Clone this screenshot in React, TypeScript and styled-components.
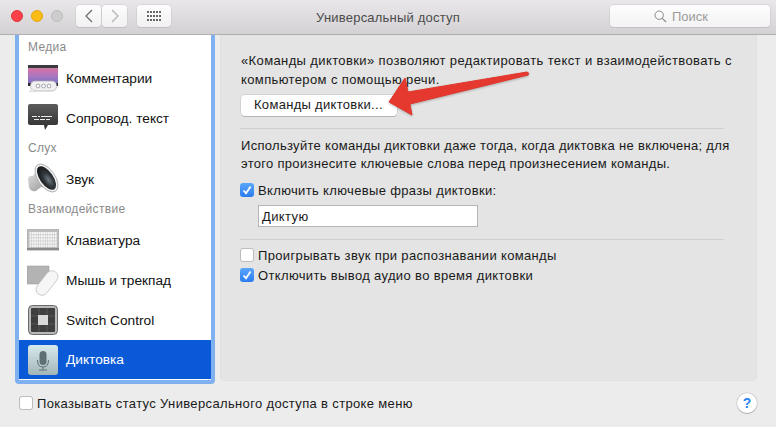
import { ReactNode } from "react";
import styled, { createGlobalStyle } from "styled-components";

const GlobalStyle = createGlobalStyle`
  html, body {
    margin: 0;
    padding: 0;
    background: #ececec;
    overflow: hidden;
  }
  * { box-sizing: border-box; }
`;

function CommentsIcon() {
  return (
    <svg width="32" height="30" viewBox="0 0 32 30">
      <defs>
        <linearGradient id="cm" x1="0" y1="0" x2="0" y2="1">
          <stop offset="0" stopColor="#d96fa6" />
          <stop offset="0.5" stopColor="#a979bf" />
          <stop offset="1" stopColor="#7a6fc4" />
        </linearGradient>
      </defs>
      <rect x="1" y="2" width="30" height="3.5" fill="#3c3a3c" />
      <rect x="1" y="5.5" width="30" height="15" fill="url(#cm)" />
      <rect x="1" y="20" width="30" height="3" fill="#2c2a2e" />
      <rect x="3.5" y="18" width="26" height="10" rx="4.5" fill="#f1f1f3" stroke="#a8a8ac" strokeWidth="0.7" />
      <path d="M5 26 L2 29 L9 28 Z" fill="#f1f1f3" stroke="#b8b8bc" strokeWidth="0.4" />
      <circle cx="11" cy="23" r="1.9" fill="#fff" stroke="#8f8f96" strokeWidth="0.8" />
      <circle cx="16.5" cy="23" r="1.9" fill="#fff" stroke="#8f8f96" strokeWidth="0.8" />
      <circle cx="22" cy="23" r="1.9" fill="#fff" stroke="#8f8f96" strokeWidth="0.8" />
    </svg>
  );
}

function CaptionsIcon() {
  return (
    <svg width="32" height="28" viewBox="0 0 32 28">
      <defs>
        <linearGradient id="cp" x1="0" y1="0" x2="0" y2="1">
          <stop offset="0" stopColor="#5c5c5c" />
          <stop offset="1" stopColor="#2e2e2e" />
        </linearGradient>
      </defs>
      <path d="M3 0 H29 Q31 0 31 2 V19 Q31 21 29 21 H21 L18 26 L17 21 H3 Q1 21 1 19 V2 Q1 0 3 0 Z" fill="url(#cp)" />
      <path d="M5 12.5 H10 M11 12.5 H13 M14 12.5 H25 M7 15.5 H12 M13 15.5 H18 M19 15.5 H23" stroke="#ececec" strokeWidth="1" />
    </svg>
  );
}

function SoundIcon() {
  return (
    <svg width="32" height="32" viewBox="0 0 32 32">
      <defs>
        <linearGradient id="sn" x1="0" y1="0" x2="1" y2="1">
          <stop offset="0" stopColor="#e6e6e6" />
          <stop offset="1" stopColor="#8a8a8a" />
        </linearGradient>
        <radialGradient id="sc" cx="0.55" cy="0.6" r="0.6">
          <stop offset="0" stopColor="#6d7a80" />
          <stop offset="0.5" stopColor="#30363a" />
          <stop offset="1" stopColor="#16181a" />
        </radialGradient>
      </defs>
      <path d="M1 16 Q2 12 6 13 L11 6 L27 27 L14 24 L9 28 Q3 29 2 24 Z" fill="url(#sn)" />
      <ellipse cx="19.5" cy="15" rx="8.5" ry="16" fill="#f2f2f2" stroke="#9a9a9a" strokeWidth="0.7" transform="rotate(-35 19.5 15)" />
      <ellipse cx="19.5" cy="15" rx="6.6" ry="13.6" fill="url(#sc)" transform="rotate(-35 19.5 15)" />
    </svg>
  );
}

function KeyboardIcon() {
  const keys = [];
  for (let row = 0; row < 5; row++) {
    for (let col = 0; col < 12; col++) {
      keys.push(<rect key={`${row}-${col}`} x={2.5 + col * 2.3} y={3 + row * 3.1} width="1.9" height="2.5" fill="#f7f7f7" />);
    }
  }
  return (
    <svg width="32" height="22" viewBox="0 0 32 22">
      <rect x="0" y="0" width="32" height="20" rx="1" fill="#bdbdbd" stroke="#a4a4a4" strokeWidth="0.6" />
      <rect x="0" y="19" width="32" height="2.4" fill="#8a8a8a" />
      {keys}
    </svg>
  );
}

function MouseIcon() {
  return (
    <svg width="32" height="34" viewBox="0 0 32 34">
      <path d="M0 3 H22 V21 H0 Z" fill="#b3b3b3" stroke="#a0a0a0" strokeWidth="0.6" />
      <rect x="14" y="6" width="12" height="28" rx="6" fill="#f6f6f6" stroke="#bcbcbc" strokeWidth="0.7" transform="rotate(38 20 20)" />
    </svg>
  );
}

function SwitchIcon() {
  return (
    <svg width="30" height="30" viewBox="0 0 30 30">
      <rect x="0.5" y="0.5" width="29" height="29" rx="4" fill="#b9b9b9" stroke="#6a6a6a" />
      <rect x="3" y="3" width="24" height="24" rx="1" fill="#3f3f3f" />
      <path d="M11 3 V27 M19 3 V27 M3 11 H27 M3 19 H27" stroke="#5e5e5e" strokeWidth="0.8" />
      <rect x="10" y="10" width="10" height="10" fill="#d9d9d9" />
    </svg>
  );
}

function MicIcon() {
  return (
    <svg width="30" height="30" viewBox="0 0 30 30">
      <defs>
        <linearGradient id="mc" x1="0" y1="0" x2="0" y2="1">
          <stop offset="0" stopColor="#d7e9ed" />
          <stop offset="1" stopColor="#a3b5b6" />
        </linearGradient>
      </defs>
      <rect x="0" y="0" width="30" height="30" rx="3" fill="url(#mc)" />
      <rect x="11.5" y="6" width="7" height="14" rx="3.5" fill="#5f7072" />
      <path d="M9.5 15 Q9.5 22 15 22 Q20.5 22 20.5 15 M15 22 V25 M11 25 H19" fill="none" stroke="#5f7072" strokeWidth="1" />
    </svg>
  );
}

function Check() {
  return (
    <svg width="10" height="10" viewBox="0 0 10 10">
      <path d="M1.5 5.5 L4 8.2 L8.6 1.5" fill="none" stroke="#fff" strokeWidth="1.8" />
    </svg>
  );
}

function CheckRow({ checked, children }: { checked?: boolean; children: ReactNode }) {
  return (
    <CheckLine>
      <CheckBox $checked={checked}>{checked && <Check />}</CheckBox>
      {children}
    </CheckLine>
  );
}

function SideRow({ icon, label, selected }: { icon: ReactNode; label: string; selected?: boolean }) {
  return (
    <Row $selected={selected}>
      <IconSlot>{icon}</IconSlot>
      {label}
    </Row>
  );
}

export default function App() {
  return (
    <Window>
      <GlobalStyle />
      <TitleBar>
        <Lights>
          <Light $color="#fc4047" $edge="#e2343b" />
          <Light $color="#fdbc14" $edge="#e0a410" />
          <Light $color="#cdcdcd" $edge="#bcbcbc" />
        </Lights>
        <NavGroup>
          <ToolButton $width={25}>
            <svg width="10" height="14" viewBox="0 0 10 14">
              <path d="M8 1 L2 7 L8 13" fill="none" stroke="#6c6c6c" strokeWidth="1.3" />
            </svg>
          </ToolButton>
          <ToolButton $width={25}>
            <svg width="10" height="14" viewBox="0 0 10 14">
              <path d="M2 1 L8 7 L2 13" fill="none" stroke="#b4b4b4" strokeWidth="1.3" />
            </svg>
          </ToolButton>
        </NavGroup>
        <ToolButton $width={34}>
          <svg width="15" height="11" viewBox="0 0 15 11" fill="#666">
            {[0, 4, 8].map((y) =>
              [0, 3, 6, 9, 12].map((x) => <rect key={`${x}-${y}`} x={x} y={y} width="2" height="2" />)
            )}
          </svg>
        </ToolButton>
        <Title>Универсальный доступ</Title>
        <SearchBox>
          <svg width="13" height="13" viewBox="0 0 13 13">
            <circle cx="5.2" cy="5.2" r="4.2" fill="none" stroke="#8a8a8a" strokeWidth="1" />
            <path d="M8.3 8.3 L12 12" stroke="#8a8a8a" strokeWidth="1.2" />
          </svg>
          Поиск
        </SearchBox>
      </TitleBar>

      <Body>
        <Sidebar>
          <SideList>
            <GroupLabel>Медиа</GroupLabel>
            <SideRow icon={<CommentsIcon />} label="Комментарии" />
            <SideRow icon={<CaptionsIcon />} label="Сопровод. текст" />
            <GroupLabel $tall>Слух</GroupLabel>
            <SideRow icon={<SoundIcon />} label="Звук" />
            <GroupLabel $tall>Взаимодействие</GroupLabel>
            <SideRow icon={<KeyboardIcon />} label="Клавиатура" />
            <SideRow icon={<MouseIcon />} label="Мышь и трекпад" />
            <SideRow icon={<SwitchIcon />} label="Switch Control" />
            <SideRow icon={<MicIcon />} label="Диктовка" selected />
          </SideList>
        </Sidebar>

        <Panel>
          <Para $leading={19} $spacing={0.38}>
            «Команды диктовки» позволяют редактировать текст и взаимодействовать с
            <br />
            компьютером с помощью речи.
          </Para>
          <PushButton>Команды диктовки...</PushButton>
          <Divider />
          <Para $leading={18} $spacing={0.3}>
            Используйте команды диктовки даже тогда, когда диктовка не включена; для
            <br />
            этого произнесите ключевые слова перед произнесением команды.
          </Para>
          <KeyRow>
            <CheckRow checked>Включить ключевые фразы диктовки:</CheckRow>
          </KeyRow>
          <PhraseInput>Диктую</PhraseInput>
          <Divider />
          <OptionRows>
            <CheckRow>Проигрывать звук при распознавании команды</CheckRow>
            <CheckRow checked>Отключить вывод аудио во время диктовки</CheckRow>
          </OptionRows>
        </Panel>
      </Body>

      <Footer>
        <CheckRow>Показывать статус Универсального доступа в строке меню</CheckRow>
        <HelpButton>?</HelpButton>
      </Footer>

      <Arrow width="150" height="60" viewBox="0 0 150 60">
        <path
          d="M139 8 Q142 9 140 11 L22 40 L24 51 L1 38 L17 14 L20 28 Z"
          fill="#e5392f"
          stroke="#e0362c"
          strokeWidth="1"
          strokeLinejoin="round"
        />
      </Arrow>
    </Window>
  );
}

const font = `"Liberation Sans", Arial, sans-serif`;

const Window = styled.div`
  position: relative;
  width: 776px;
  height: 427px;
  background: #ececec;
  font-family: ${font};
  font-size: 13px;
  color: #1a1a1a;
  overflow: hidden;
`;

const TitleBar = styled.div`
  position: relative;
  height: 35px;
  display: flex;
  align-items: flex-start;
  padding: 5px 6px 0 11px;
  background: linear-gradient(#e9e7e9, #d3d1d3);
  border-bottom: 1px solid #b0aeb0;
`;

const Lights = styled.div`
  display: flex;
  gap: 8px;
  margin-top: 5px;
  margin-right: 13px;
`;

const Light = styled.span<{ $color: string; $edge: string }>`
  width: 12px;
  height: 12px;
  border-radius: 50%;
  background: ${(p) => p.$color};
  border: 1px solid ${(p) => p.$edge};
`;

const NavGroup = styled.div`
  display: flex;
  gap: 1px;
  margin-right: 10px;
`;

const ToolButton = styled.div<{ $width: number }>`
  width: ${(p) => p.$width}px;
  height: 22px;
  display: flex;
  align-items: center;
  justify-content: center;
  background: linear-gradient(#fdfdfd, #f1f1f1);
  border-radius: 4px;
  box-shadow: 0 0 0 0.5px #c8c6c8, 0 1px 0 #bdbbbd;
`;

const Title = styled.div`
  position: absolute;
  left: 0;
  right: 0;
  top: 10px;
  text-align: center;
  color: #4c4c4c;
  font-size: 13px;
  letter-spacing: 0.2px;
`;

const SearchBox = styled.div`
  margin-left: auto;
  width: 160px;
  height: 22px;
  display: flex;
  align-items: center;
  justify-content: center;
  gap: 5px;
  padding-right: 18px;
  color: #9a9a9a;
  font-size: 13px;
  background: linear-gradient(#fdfdfd, #f3f3f3);
  border-radius: 4px;
  box-shadow: 0 0 0 0.5px #c8c6c8, 0 1px 0 #bdbbbd;
`;

const Body = styled.div`
  display: flex;
  align-items: flex-start;
  padding-left: 15px;
`;

const Sidebar = styled.div`
  width: 200px;
  height: 349px;
  padding: 0 4px 4px;
  background: #7fb0f0;
  border-radius: 0 0 4px 4px;
`;

const SideList = styled.div`
  height: 345px;
  padding-top: 3px;
  background: #fff;
`;

const GroupLabel = styled.div<{ $tall?: boolean }>`
  height: ${(p) => (p.$tall ? 21 : 20)}px;
  padding-left: 9px;
  line-height: ${(p) => (p.$tall ? 21 : 19)}px;
  font-size: 12px;
  letter-spacing: 0.3px;
  color: #8a8a8a;
`;

const Row = styled.div<{ $selected?: boolean }>`
  height: ${(p) => (p.$selected ? 39 : 40)}px;
  display: flex;
  align-items: center;
  padding-left: 8px;
  font-size: 13.7px;
  color: ${(p) => (p.$selected ? "#fff" : "#111")};
  background: ${(p) => (p.$selected ? "#0a5ad8" : "transparent")};
`;

const IconSlot = styled.span`
  width: 32px;
  height: 34px;
  margin-right: 7px;
  display: flex;
  align-items: center;
  justify-content: center;
`;

const Panel = styled.div`
  width: 537px;
  height: 346px;
  margin-left: 5px;
  padding: 8px 0 0 21px;
  background: #e3e4e3;
  border-radius: 0 0 5px 5px;
  box-shadow: inset 0 0 0 0.5px #dcdcdc;
`;

const Para = styled.div<{ $leading: number; $spacing: number }>`
  margin-top: 8px;
  line-height: ${(p) => p.$leading}px;
  letter-spacing: ${(p) => p.$spacing}px;
  font-size: 13px;
  color: #1a1a1a;
`;

const PushButton = styled.div`
  width: 156px;
  height: 21px;
  margin-top: 6px;
  padding-left: 13px;
  line-height: 20px;
  letter-spacing: 0.3px;
  background: #fff;
  border-radius: 4px;
  box-shadow: 0 0 0 0.5px #c0c0c0, 0 1px 0 #a8a8a8;
`;

const Divider = styled.div`
  width: 484px;
  height: 1px;
  margin: 12px 0 0 -1px;
  background: #cfcfcf;
`;

const KeyRow = styled.div`
  margin-top: 7px;
`;

const CheckLine = styled.div`
  height: 20px;
  display: flex;
  align-items: center;
  gap: 4px;
  margin-left: -1px;
  letter-spacing: 0.35px;
`;

const CheckBox = styled.span<{ $checked?: boolean }>`
  width: 14px;
  height: 14px;
  display: flex;
  align-items: center;
  justify-content: center;
  border-radius: 3px;
  background: ${(p) => (p.$checked ? "linear-gradient(#5aa6fb, #2a7bf0)" : "#fff")};
  box-shadow: ${(p) => (p.$checked ? "none" : "inset 0 0 0 1px #bdbdbd")};
`;

const PhraseInput = styled.div`
  width: 220px;
  height: 22px;
  margin: 5px 0 0 17px;
  padding-left: 3px;
  line-height: 21px;
  letter-spacing: 0.4px;
  background: #fff;
  border: 1px solid #b6b6b6;
`;

const OptionRows = styled.div`
  margin-top: 5px;
`;

const Footer = styled.div`
  height: 38px;
  display: flex;
  align-items: center;
  justify-content: space-between;
  padding: 0 19px 0 20px;
`;

const HelpButton = styled.div`
  width: 20px;
  height: 20px;
  display: flex;
  align-items: center;
  justify-content: center;
  border-radius: 50%;
  background: #fff;
  color: #2a82f6;
  font-size: 14px;
  font-weight: 700;
  box-shadow: 0 0 0 0.5px #bdbdbd, 0 1px 1px #aaa;
`;

const Arrow = styled.svg`
  position: absolute;
  left: 388px;
  top: 64px;
  filter: drop-shadow(0 1px 1px rgba(0, 0, 0, 0.25));
`;
